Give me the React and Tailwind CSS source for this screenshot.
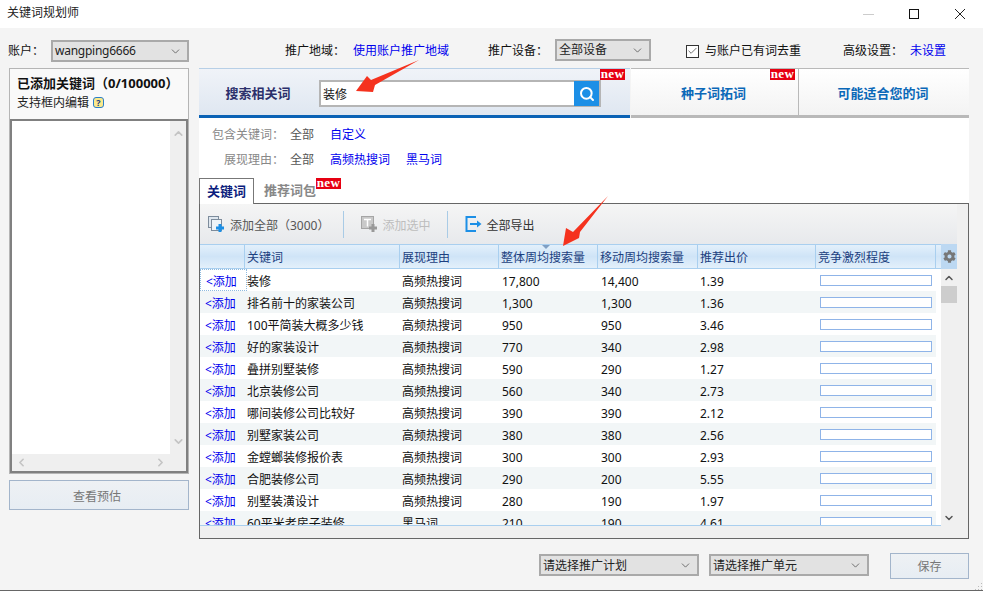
import React from 'react';
import { Search, ChevronDown, ChevronUp, ChevronLeft, ChevronRight, Check } from 'lucide-react';
import { FaCog } from 'react-icons/fa';

const rows = [
    ['装修', '高频热搜词', '17,800', '14,400', '1.39'],
    ['排名前十的家装公司', '高频热搜词', '1,300', '1,300', '1.36'],
    ['100平简装大概多少钱', '高频热搜词', '950', '950', '3.46'],
    ['好的家装设计', '高频热搜词', '770', '340', '2.98'],
    ['叠拼别墅装修', '高频热搜词', '590', '290', '1.27'],
    ['北京装修公司', '高频热搜词', '560', '340', '2.73'],
    ['哪间装修公司比较好', '高频热搜词', '390', '390', '2.12'],
    ['别墅家装公司', '高频热搜词', '380', '380', '2.56'],
    ['金螳螂装修报价表', '高频热搜词', '300', '300', '2.93'],
    ['合肥装修公司', '高频热搜词', '290', '200', '5.55'],
    ['别墅装潢设计', '高频热搜词', '280', '190', '1.97'],
    ['60平米老房子装修', '黑马词', '210', '190', '4.61'],
];

function Select({ label, className, labelClass }) {
    return (
        <div className={"flex items-center justify-between bg-[#e2e2e2] border-2 border-[#a9a9a9] pl-[2px] pr-[5px] text-[#222] " + className}>
            <span className={labelClass}>{label}</span>
            <ChevronDown size={13} strokeWidth={1.5} className="text-[#555]" />
        </div>
    );
}

function NewBadge({ className }) {
    return (
        <span className={"absolute w-[25px] h-[11px] bg-[#e60012] text-white text-[13px] leading-[10px] tracking-[0.3px] text-center font-bold font-['Liberation_Serif',serif] " + className}>new</span>
    );
}

function HeaderCell({ className, children }) {
    return (
        <div className={"h-full shrink-0 pl-[2px] flex items-center border-r border-[#a9cfef] text-[#1c3f80] " + className}>{children}</div>
    );
}

export default function App() {
    return (
        <div className="relative w-[983px] h-[591px] overflow-hidden bg-[#f4f4f4] text-[12px] text-[#111] font-['Noto_Sans','Noto_Sans_CJK_SC',sans-serif]">
            {/* title bar */}
            <div className="h-[28px] bg-white flex items-center pl-[7px] pr-[18px]">
                <span className="text-[#222] pb-[2px]">关键词规划师</span>
                <div className="ml-auto flex items-center">
                    <div className="w-[11px] h-px bg-[#ccc]" />
                    <div className="ml-[35px] w-[10px] h-[10px] border border-[#111]" />
                    <svg className="ml-[36px]" width="10" height="10" viewBox="0 0 10 10">
                        <path d="M0 0L10 10M10 0L0 10" stroke="#222" strokeWidth="1" />
                    </svg>
                </div>
            </div>

            {/* account row */}
            <div className="h-[40px] pt-[6px] flex items-center">
                <span className="ml-[8px] w-[43px]">账户：</span>
                <Select label="wangping6666" labelClass="tracking-[-0.25px]" className="w-[138px] h-[22px] shrink-0" />
                <span className="ml-[96px]">推广地域：</span>
                <a className="ml-[8px] text-[#0000ee]">使用账户推广地域</a>
                <span className="ml-[39px]">推广设备：</span>
                <Select label="全部设备" className="ml-[7px] w-[96px] h-[22px] mb-[2px]" />
                <div className="ml-[35px] w-[13px] h-[13px] border border-[#333] bg-white flex items-center justify-center">
                    <Check size={12} strokeWidth={2} className="text-[#666]" />
                </div>
                <span className="ml-[6px]">与账户已有词去重</span>
                <span className="ml-[42px]">高级设置：</span>
                <a className="ml-[7px] text-[#0000ee]">未设置</a>
            </div>

            <div className="flex">
                {/* left side */}
                <div className="ml-[9px] w-[180px] shrink-0">
                    <div className="h-[406px] border border-[#b5b5b5] bg-[#f9f9f9] flex flex-col">
                        <div className="h-[50px] shrink-0 pl-[7px] pt-[5px] leading-[19px]">
                            <div className="font-bold text-[13px] text-[#111] whitespace-nowrap">已添加关键词（0/100000）</div>
                            <div className="flex items-center gap-[4px] text-[#222]">
                                支持框内编辑
                                <span className="w-[11px] h-[11px] rounded-[3px] border border-[#2a7fc9] bg-[#fbe98b] text-[#1b3f80] text-[9px] leading-[9px] font-bold text-center">?</span>
                            </div>
                        </div>
                        <div className="flex-1 flex flex-col border-2 border-[#808080] bg-[#efefef]">
                            <div className="flex-1 flex min-h-0">
                                <div className="flex-1 bg-white" />
                                <div className="w-[16px] flex flex-col items-center justify-between py-[6px] text-[#c4c4c4]">
                                    <ChevronUp size={13} strokeWidth={3} />
                                    <ChevronDown size={13} strokeWidth={3} />
                                </div>
                            </div>
                            <div className="h-[17px] flex items-center justify-between pl-[3px] pr-[19px] text-[#c4c4c4]">
                                <ChevronLeft size={13} strokeWidth={3} />
                                <ChevronRight size={13} strokeWidth={3} />
                            </div>
                        </div>
                    </div>
                    <div className="mt-[6px] h-[30px] pr-[4px] pt-[3px] border border-[#a3b5cb] bg-gradient-to-b from-[#eef1f4] to-[#e7edf3] text-[#777] flex items-center justify-center">
                        查看预估
                    </div>
                </div>

                {/* right side */}
                <div className="ml-[10px] w-[770px] shrink-0">
                    <div className="flex h-[50px]">
                        <div className="relative w-[431px] shrink-0 flex items-center border-t border-[#b7cfe6] border-b-[3px] border-b-[#0a62b5] bg-gradient-to-b from-[#f0f3f8] to-[#dfe7f1]">
                            <span className="w-[120px] pt-[3px] pr-[2px] text-center text-[13px] font-bold text-[#2b2f6b]">搜索相关词</span>
                            <div className="w-[282px] h-[27px] mt-[3px] border-2 border-[#b5b5b5] bg-white flex items-center pl-[2px]">
                                <span className="flex-1 pt-[2px]">装修</span>
                                <div className="w-[25px] h-[25px] mt-[-2px] mb-[-2px] bg-[#1c8fe6] flex items-center justify-center">
                                    <Search size={16} strokeWidth={3} className="text-white" />
                                </div>
                            </div>
                            <NewBadge className="left-[401px] top-0" />
                        </div>
                        <div className="relative w-[168px] shrink-0 ml-[1px] pt-[3px] pr-[2px] flex items-center justify-center border-t border-[#b9b9b9] border-b-[3px] border-b-[#b9b9b9] border-r border-r-[#b9b9b9] bg-gradient-to-b from-white to-[#f3f3f3] text-[13px] font-bold text-[#0a68b8]">
                            种子词拓词
                            <NewBadge className="right-[3px] top-0" />
                        </div>
                        <div className="flex-1 pt-[3px] pr-[2px] flex items-center justify-center border-t border-[#b9b9b9] border-b-[3px] border-b-[#b9b9b9] bg-gradient-to-b from-white to-[#f3f3f3] text-[13px] font-bold text-[#0a68b8]">
                            可能适合您的词
                        </div>
                    </div>

                    <div className="bg-white h-[86px] flex flex-col">
                        <div className="flex items-center h-[17px] mt-[8px]">
                            <span className="w-[85px] text-right text-[#888]">包含关键词：</span>
                            <span className="ml-[6px] text-[#555]">全部</span>
                            <a className="ml-[16px] text-[#0000ee]">自定义</a>
                        </div>
                        <div className="flex items-center h-[17px] mt-[8px]">
                            <span className="w-[85px] text-right text-[#888]">展现理由：</span>
                            <span className="ml-[6px] text-[#555]">全部</span>
                            <a className="ml-[16px] text-[#0000ee]">高频热搜词</a>
                            <a className="ml-[16px] text-[#0000ee]">黑马词</a>
                        </div>
                        <div className="relative mt-auto flex items-end h-[26px]">
                            <div className="w-[55px] h-[26px] border border-b-0 border-[#777] bg-white flex items-center justify-center text-[13px] font-bold text-[#0b1c7d]">关键词</div>
                            <span className="ml-[10px] mb-[4px] text-[13px] font-bold text-[#888]">推荐词包</span>
                            <NewBadge className="left-[117px] top-0" />
                        </div>
                    </div>

                    {/* keyword grid */}
                    <div className="h-[336px] -mt-px border border-[#666] bg-[#f0f0f0] flex flex-col">
                        <div className="h-[40px] shrink-0 w-[757px] bg-gradient-to-b from-[#f5f5f5] to-[#e7e9ec] flex items-center pl-[8px] text-[#555]">
                            <svg width="17" height="17" viewBox="0 0 17 17">
                                <rect x="0.5" y="0.5" width="10" height="11" fill="#dfe7ef" stroke="#7d8c9c" />
                                <rect x="3.5" y="3.5" width="10" height="11" fill="#eef3f7" stroke="#7d8c9c" />
                                <path d="M12 8v8M8 12h8" stroke="#1c8fe6" strokeWidth="3" />
                            </svg>
                            <span className="ml-[5px] pt-[3px]">添加全部（3000）</span>
                            <div className="ml-[14px] w-px h-[27px] bg-[#a9cbe6]" />
                            <svg className="ml-[17px]" width="17" height="17" viewBox="0 0 17 17">
                                <rect x="0.5" y="0.5" width="12" height="12" fill="#c9c9c9" stroke="#a5a5a5" />
                                <path d="M3 3.5h7M6.5 3.5v7" stroke="#fff" strokeWidth="1.5" />
                                <path d="M12 8v8M8 12h8" stroke="#999" strokeWidth="3" />
                            </svg>
                            <span className="ml-[4px] pt-[3px] text-[#bdbdbd]">添加选中</span>
                            <div className="ml-[17px] w-px h-[27px] bg-[#a9cbe6]" />
                            <svg className="ml-[17px]" width="17" height="17" viewBox="0 0 17 17" fill="none">
                                <path d="M11 1H1.5v14H11" stroke="#1c8fe6" strokeWidth="2" />
                                <path d="M5 8h9" stroke="#1c8fe6" strokeWidth="2" />
                                <path d="M12 4.5L16.5 8 12 11.5z" fill="#1c8fe6" />
                            </svg>
                            <span className="ml-[4px] pt-[3px] text-[#333]">全部导出</span>
                        </div>

                        <div className="flex flex-1 min-h-0">
                            <div className="w-[741px] shrink-0 bg-white border-b border-[#a9cfef] flex flex-col overflow-hidden">
                                <div className="relative h-[25px] shrink-0 flex border-y border-[#a9cfef] bg-gradient-to-b from-[#e3f0fb] via-[#cfe4f7] to-[#e3f0fb]">
                                    <HeaderCell className="w-[45px]" />
                                    <HeaderCell className="w-[155px] pt-[2px]">关键词</HeaderCell>
                                    <HeaderCell className="w-[99px] pt-[2px]">展现理由</HeaderCell>
                                    <HeaderCell className="w-[99px] pt-[2px]">整体周均搜索量</HeaderCell>
                                    <HeaderCell className="w-[100px] pt-[2px]">移动周均搜索量</HeaderCell>
                                    <HeaderCell className="w-[118px] pt-[2px]">推荐出价</HeaderCell>
                                    <HeaderCell className="w-[120px] pt-[2px]">竞争激烈程度</HeaderCell>
                                    <div className="absolute left-[342px] top-0 w-0 h-0 border-x-[4px] border-x-transparent border-t-[4px] border-t-[#7f9fc4]" />
                                </div>
                                {rows.map((row, index) => (
                                    <div key={index} className={"h-[22px] shrink-0 w-[736px] flex items-center " + (index % 2 === 1 ? "bg-[#f2f6f7]" : "bg-white")}>
                                        <div className={"w-[47px] h-full shrink-0 flex items-center pl-[5px] pt-[3px] text-[#0000ee] " + (index === 0 ? "border border-dotted border-[#8fbbe0]" : "")}>&lt;添加</div>
                                        <div className="w-[155px] shrink-0 pt-[3px]">{row[0]}</div>
                                        <div className="w-[100px] shrink-0 pt-[3px]">{row[1]}</div>
                                        <div className="w-[99px] shrink-0 pt-[3px]">{row[2]}</div>
                                        <div className="w-[99px] shrink-0 pt-[3px]">{row[3]}</div>
                                        <div className="w-[120px] shrink-0 pt-[3px]">{row[4]}</div>
                                        <div className="w-[112px] h-[11px] mt-px shrink-0 border border-[#8fb4e8] bg-white" />
                                    </div>
                                ))}
                            </div>
                            <div className="w-[16px] shrink-0 flex flex-col items-center text-[#555]">
                                <div className="h-[25px] w-full shrink-0 bg-[#bcd8f2] flex items-center justify-center">
                                    <FaCog size={13} className="text-[#777]" />
                                </div>
                                <ChevronUp size={12} strokeWidth={3} className="mt-[3px]" />
                                <div className="w-full h-[17px] mt-[2px] bg-[#cdcdcd]" />
                                <ChevronDown size={12} strokeWidth={3} className="mt-auto mb-[2px]" />
                            </div>
                        </div>
                        <div className="h-[12px] shrink-0" />
                    </div>
                </div>
            </div>

            {/* bottom row */}
            <div className="flex items-start mt-[14px]">
                <Select label="请选择推广计划" labelClass="pt-px" className="ml-[539px] w-[160px] h-[22px] mt-px" />
                <Select label="请选择推广单元" labelClass="pt-px" className="ml-[10px] w-[160px] h-[22px] mt-px" />
                <div className="ml-[21px] w-[79px] h-[26px] pt-[2px] border border-[#a3b5cb] bg-gradient-to-b from-[#eef1f4] to-[#e7edf3] text-[#777] flex items-center justify-center">保存</div>
            </div>

            {/* page edge and resize grip */}
            <div className="absolute left-0 right-0 bottom-0 h-px bg-[#666]" />
            <svg className="absolute right-0 bottom-px" width="8" height="7" viewBox="0 0 8 7" fill="#bbb">
                <rect x="6" y="0" width="1" height="1" />
                <rect x="3" y="3" width="1" height="1" />
                <rect x="6" y="3" width="1" height="1" />
                <rect x="0" y="6" width="1" height="1" />
                <rect x="3" y="6" width="1" height="1" />
                <rect x="6" y="6" width="1" height="1" />
            </svg>

            {/* red annotation arrows */}
            <svg className="absolute left-0 top-0 pointer-events-none" width="983" height="591" fill="#f5321e">
                <polygon points="419,60 371,80 367,76 356,91 373,92 375,85" />
                <polygon points="608,196 573,232 566,228 563,246 579,238 580,232" />
            </svg>
        </div>
    );
}
